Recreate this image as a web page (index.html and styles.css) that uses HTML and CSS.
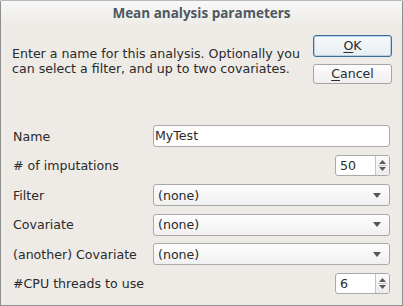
FILE: index.html
```html
<!DOCTYPE html>
<html>
<head>
<meta charset="utf-8">
<link rel="stylesheet" href="styles.css">
</head>
<body>
<div class="window">
  <div class="titlebar">Mean analysis parameters</div>
  <div class="content">
    <div class="top">
      <p class="desc">Enter a name for this analysis. Optionally you<br>can select a filter, and up to two covariates.</p>
      <div class="buttons">
        <button class="btn btn-default"><u>O</u>K</button>
        <button class="btn"><u>C</u>ancel</button>
      </div>
    </div>
    <div class="form">
      <label class="lbl">Name</label>
      <div class="field"><div class="input">MyTest</div></div>

      <label class="lbl"># of imputations</label>
      <div class="field end">
        <div class="spin"><span class="spin-val">50</span><span class="spin-arrows"><svg width="9" height="15" viewBox="0 0 9 15"><path d="M1 6 L4.5 2 L8 6 Z" fill="#5a5a5a"/><line x1="0" y1="7.5" x2="9" y2="7.5" stroke="#c8c8c8"/><path d="M1 9 L8 9 L4.5 13 Z" fill="#5a5a5a"/></svg></span></div>
      </div>

      <label class="lbl">Filter</label>
      <div class="field"><div class="combo"><span>(none)</span><svg class="caret" width="8" height="5" viewBox="0 0 8 5"><path d="M0 0 L8 0 L4 5 Z" fill="#555"/></svg></div></div>

      <label class="lbl">Covariate</label>
      <div class="field"><div class="combo"><span>(none)</span><svg class="caret" width="8" height="5" viewBox="0 0 8 5"><path d="M0 0 L8 0 L4 5 Z" fill="#555"/></svg></div></div>

      <label class="lbl">(another) Covariate</label>
      <div class="field"><div class="combo"><span>(none)</span><svg class="caret" width="8" height="5" viewBox="0 0 8 5"><path d="M0 0 L8 0 L4 5 Z" fill="#555"/></svg></div></div>

      <label class="lbl">#CPU threads to use</label>
      <div class="field end">
        <div class="spin"><span class="spin-val">6</span><span class="spin-arrows"><svg width="9" height="15" viewBox="0 0 9 15"><path d="M1 6 L4.5 2 L8 6 Z" fill="#5a5a5a"/><line x1="0" y1="7.5" x2="9" y2="7.5" stroke="#c8c8c8"/><path d="M1 9 L8 9 L4.5 13 Z" fill="#5a5a5a"/></svg></span></div>
      </div>
    </div>
  </div>
</div>
</body>
</html>
```

FILE: styles.css
```css
html, body {
  margin: 0;
  padding: 0;
  width: 403px;
  height: 306px;
  overflow: hidden;
  background: #eeebe7;
}
.window {
  box-sizing: border-box;
  width: 403px;
  height: 306px;
  border: 1px solid #8e8e8e;
  border-top-color: #b8b8b8;
  border-radius: 2px 2px 0 0;
  background: #eeebe7;
  font-family: "DejaVu Sans", sans-serif;
  font-size: 12.6px;
  color: #2a2a2a;
  display: flex;
  flex-direction: column;
}
.titlebar {
  height: 25px;
  flex: none;
  background: linear-gradient(#f8f8f8, #eeebe7);
  text-align: center;
  font-family: "Open Sans", "DejaVu Sans", sans-serif;
  font-weight: bold;
  font-size: 13.5px;
  line-height: 25px;
  color: #4e5860;
}
.content {
  padding: 9px 11px 0 11px;
}
.top {
  display: flex;
  justify-content: space-between;
  align-items: flex-start;
}
.desc {
  margin: 12px 0 0 0;
  line-height: 14.5px;
}
.buttons {
  display: flex;
  flex-direction: column;
  gap: 7px;
  margin-right: -1px;
  width: 79px;
  flex: none;
}
.btn {
  font-family: "DejaVu Sans", sans-serif;
  font-size: 12.6px;
  color: #2a2a2a;
  height: 20px;
  padding: 0;
  border: 1px solid #a6a6a6;
  border-radius: 3px;
  background: linear-gradient(#fdfdfd, #eeeeee);
  line-height: 18px;
}
.btn u {
  text-decoration-thickness: 1px;
  text-underline-offset: 2px;
}
.btn-default {
  height: 22px;
  border: 1px solid #3d6e99;
  box-shadow: inset 0 0 0 1px #b9d0e4;
  background: linear-gradient(#f6f9fb, #e9eef2);
  line-height: 20px;
}
.form {
  margin-top: 41px;
  display: grid;
  grid-template-columns: 141px 1fr;
  grid-auto-rows: 22px;
  row-gap: 7.6px;
  margin-right: 1px;
}
.lbl {
  display: flex;
  align-items: center;
  padding-left: 1px;
}
.field {
  display: flex;
  align-items: center;
}
.field.end {
  justify-content: flex-end;
}
.input {
  box-sizing: border-box;
  width: 100%;
  height: 22px;
  border: 1px solid #a9a9a9;
  border-radius: 3px;
  background: #ffffff;
  padding-left: 1px;
  line-height: 20px;
}
.combo {
  box-sizing: border-box;
  width: 100%;
  height: 22px;
  border: 1px solid #a9a9a9;
  border-radius: 3px;
  background: linear-gradient(#fdfdfd, #f0f0f0);
  padding: 0 8px 0 4px;
  display: flex;
  align-items: center;
  justify-content: space-between;
}
.caret {
  display: block;
}
.spin {
  box-sizing: border-box;
  width: 55px;
  height: 21px;
  border: 1px solid #a9a9a9;
  border-radius: 3px;
  background: #ffffff;
  display: flex;
  overflow: hidden;
}
.spin-val {
  flex: 1;
  padding-left: 4px;
  line-height: 19px;
}
.spin-arrows {
  width: 13px;
  border-left: 1px solid #c4c4c4;
  background: linear-gradient(#fbfbfb, #ececec);
  display: flex;
  align-items: center;
  justify-content: center;
}
.spin-arrows svg {
  display: block;
}
```
